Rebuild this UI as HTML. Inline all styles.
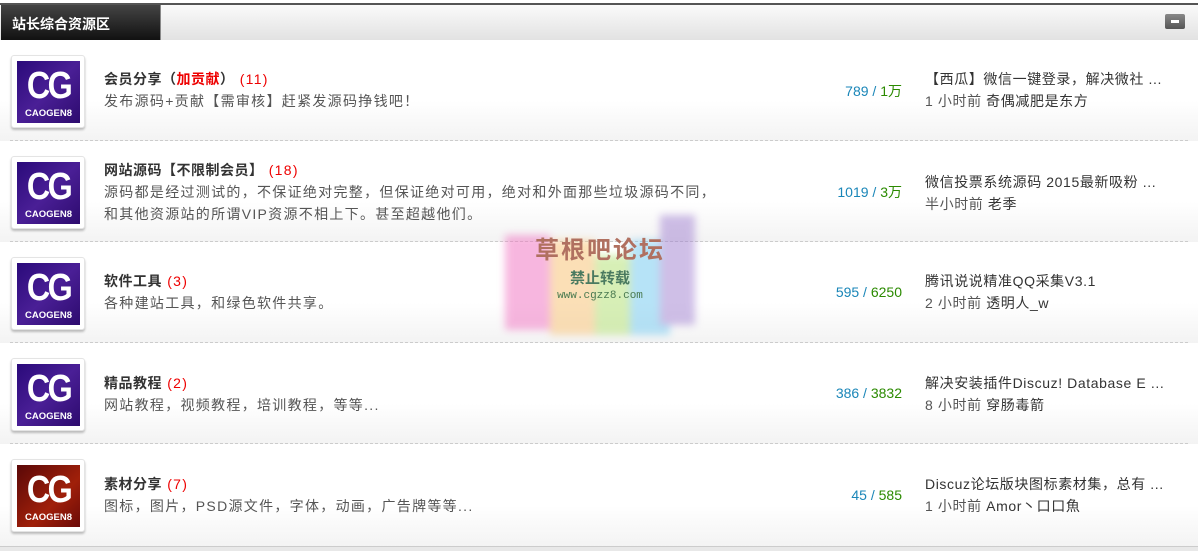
<!DOCTYPE html>
<html><head><meta charset="utf-8"><style>
*{margin:0;padding:0;box-sizing:border-box}
body{width:1198px;height:551px;background:#fff;font-family:"Liberation Sans","Noto Sans CJK SC",sans-serif;font-size:14px;color:#444;position:relative;overflow:hidden}
.hd{position:absolute;left:0;top:3px;width:1198px;height:37px;border-top:2px solid #555;background:linear-gradient(#fafafa,#e2e2e2)}
.tab{position:absolute;left:1px;top:0;width:160px;height:35px;background:linear-gradient(#444,#111);color:#fff;font-weight:bold;font-size:14px;padding:9px 0 0 11px;border-right:1px solid #888}
.btn{position:absolute;left:1165px;top:9px;width:20px;height:15px;border-radius:2px;background:linear-gradient(#888,#555)}
.btn:after{content:"";position:absolute;left:6px;top:6px;width:8px;height:3px;background:#fff}
.row{position:absolute;left:0;width:1198px;height:101px;background:linear-gradient(#fff 60%,#f3f3f3)}
.sep{position:absolute;left:10px;right:10px;bottom:0;border-bottom:1px dashed #ccc}
.ic{position:absolute;left:11px;top:15px;width:74px;height:73px;background:#fff;border:1px solid #e4e4e4;box-shadow:0 2px 2px #bbb;border-radius:3px}
.ic div{position:absolute;left:5px;top:5px;width:63px;height:62px;background:linear-gradient(135deg,#2a0a7a,#4a1f96 50%,#2d0b6e);color:#fff;text-align:center}
.ic.r div{background:linear-gradient(135deg,#5a0808,#a0200a 60%,#6a0a08)}
.ic b{display:block;font-size:38px;line-height:38px;margin-top:6px;letter-spacing:-3px;transform:scaleX(.85)}
.ic i{display:block;font-style:normal;font-weight:bold;font-size:9.5px;margin-top:3px}
.t{position:absolute;left:104px;font-size:14px;line-height:22px;letter-spacing:1.3px;color:#555}
.t b{color:#333;letter-spacing:.5px}
.red{color:#e00}
.cnt{position:absolute;right:296px;font-size:14px;color:#1a86b8}
.cnt span{color:#2b8a00}
.lp{position:absolute;left:925px;font-size:14px;line-height:22px;color:#333;letter-spacing:.6px}
.lp .g{color:#555}
.wm{position:absolute;left:500px;top:215px;width:200px;height:120px;opacity:.5;filter:blur(4px)}
.wm div{position:absolute}
.wt{position:absolute;left:500px;top:230px;width:200px;text-align:center}
</style></head><body>
<div class="hd"><div class="tab">站长综合资源区</div><div class="btn"></div></div>

<div class="row" style="top:40px"><div class="sep"></div>
<div class="ic"><div><b>CG</b><i>CAOGEN8</i></div></div>
<div class="t" style="top:28px"><b>会员分享（<span class="red">加贡献</span>）</b> <span class="red">(11)</span><br>发布源码+贡献【需审核】赶紧发源码挣钱吧！</div>
<div class="cnt" style="top:41px">789 / <span>1万</span></div>
<div class="lp" style="top:28px">【西瓜】微信一键登录，解决微社 ...<br><span class="g">1 小时前</span> 奇偶减肥是东方</div></div>

<div class="row" style="top:141px"><div class="sep"></div>
<div class="ic"><div><b>CG</b><i>CAOGEN8</i></div></div>
<div class="t" style="top:18px"><b>网站源码【不限制会员】</b> <span class="red">(18)</span><br>源码都是经过测试的，不保证绝对完整，但保证绝对可用，绝对和外面那些垃圾源码不同，<br>和其他资源站的所谓VIP资源不相上下。甚至超越他们。</div>
<div class="cnt" style="top:41px">1019 / <span>3万</span></div>
<div class="lp" style="top:30px">微信投票系统源码 2015最新吸粉 ...<br><span class="g">半小时前</span> 老季</div></div>

<div class="row" style="top:242px"><div class="sep"></div>
<div class="ic"><div><b>CG</b><i>CAOGEN8</i></div></div>
<div class="t" style="top:28px"><b>软件工具</b> <span class="red">(3)</span><br>各种建站工具，和绿色软件共享。</div>
<div class="cnt" style="top:42px">595 / <span>6250</span></div>
<div class="lp" style="top:28px">腾讯说说精准QQ采集V3.1<br><span class="g">2 小时前</span> 透明人_w</div></div>

<div class="row" style="top:343px"><div class="sep"></div>
<div class="ic"><div><b>CG</b><i>CAOGEN8</i></div></div>
<div class="t" style="top:29px"><b>精品教程</b> <span class="red">(2)</span><br>网站教程，视频教程，培训教程，等等...</div>
<div class="cnt" style="top:42px">386 / <span>3832</span></div>
<div class="lp" style="top:29px">解决安装插件Discuz! Database E ...<br><span class="g">8 小时前</span> 穿肠毒箭</div></div>

<div class="row" style="top:444px;height:103px"><div class="sep" style="left:0;right:0;border-bottom:1px solid #ccc"></div>
<div class="ic r"><div><b>CG</b><i>CAOGEN8</i></div></div>
<div class="t" style="top:29px"><b>素材分享</b> <span class="red">(7)</span><br>图标，图片，PSD源文件，字体，动画，广告牌等等...</div>
<div class="cnt" style="top:43px">45 / <span>585</span></div>
<div class="lp" style="top:29px">Discuz论坛版块图标素材集，总有 ...<br><span class="g">1 小时前</span> Amor丶口口魚</div></div>
<div style="position:absolute;left:0;top:547px;width:1198px;height:4px;background:#e8e8e8"></div>

<div class="wm">
<div style="left:5px;top:20px;width:45px;height:95px;background:#f070c0"></div>
<div style="left:50px;top:25px;width:45px;height:95px;background:#f8c070"></div>
<div style="left:95px;top:40px;width:40px;height:80px;background:#b0e070"></div>
<div style="left:130px;top:25px;width:40px;height:95px;background:#70c8f0"></div>
<div style="left:160px;top:0px;width:35px;height:110px;background:#a080d0"></div>
</div>
<div class="wt"><div style="font-size:24px;font-weight:bold;color:#b07060;letter-spacing:2px">草根吧论坛</div>
<div style="font-size:15px;font-weight:bold;color:#4a7a60;margin-top:2px">禁止转载</div>
<div style="font-size:11px;color:#4a7a50;font-family:'Liberation Mono',monospace;margin-top:2px">www.cgzz8.com</div></div>
</body></html>
